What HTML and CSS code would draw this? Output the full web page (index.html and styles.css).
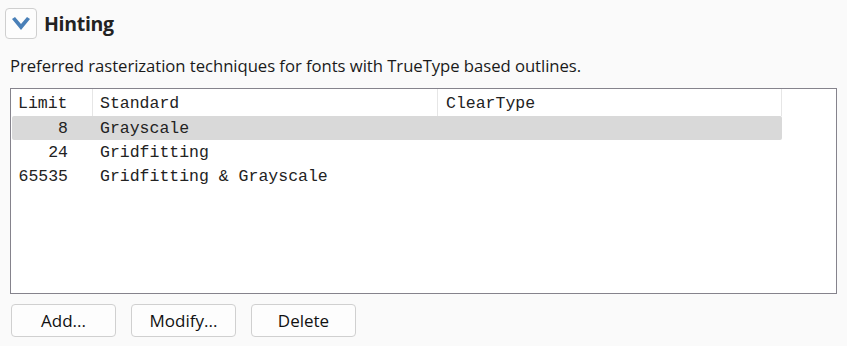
FILE: index.html
```html
<!DOCTYPE html>
<html lang="en">
<head>
    <meta charset="UTF-8">
    <title>Hinting</title>
    <link rel="stylesheet" href="styles.css">
</head>
<body>

    <!-- Section heading -->
    <div class="section-head">
        <span class="toggle">
            <svg width="20" height="14" viewBox="0 0 20 14">
                <path d="M1 2 L4 0 L10 7 L16 0 L19 2 L10 13 Z" fill="#4a80b8"/>
            </svg>
        </span>
        <h2>Hinting</h2>
    </div>

    <p class="desc">Preferred rasterization techniques for fonts with TrueType based outlines.</p>

    <!-- Limits list -->
    <div class="list-box">
        <div class="list-row list-header">
            <div class="cell col-limit">Limit</div>
            <div class="cell col-std">Standard</div>
            <div class="cell col-ct">ClearType</div>
        </div>
        <div class="list-row selected">
            <div class="cell col-limit num">8</div>
            <div class="cell col-std">Grayscale</div>
            <div class="cell col-ct"></div>
        </div>
        <div class="list-row">
            <div class="cell col-limit num">24</div>
            <div class="cell col-std">Gridfitting</div>
            <div class="cell col-ct"></div>
        </div>
        <div class="list-row">
            <div class="cell col-limit num">65535</div>
            <div class="cell col-std">Gridfitting &amp; Grayscale</div>
            <div class="cell col-ct"></div>
        </div>
    </div>

    <div class="buttons">
        <button>Add...</button>
        <button>Modify...</button>
        <button>Delete</button>
    </div>

</body>
</html>
```

FILE: styles.css
```css
* {
  margin: 0;
  padding: 0;
  box-sizing: border-box;
}

body {
  background-color: #fafafa;
  color: #1a1a1a;
  font-family: "Open Sans", "Noto Sans", sans-serif;
  padding: 8px 10px 0 10px;
  width: 847px;
  height: 346px;
  overflow: hidden;
}

.section-head {
  display: flex;
  align-items: center;
  margin-left: -5px;
  height: 31px;
}

.toggle {
  width: 32px;
  height: 31px;
  border: 1px solid #cfcfcf;
  border-radius: 4px;
  background: #fdfdfd;
  display: flex;
  justify-content: center;
  align-items: center;
}

h2 {
  font-size: 19.5px;
  font-weight: bold;
  color: #222;
  margin-left: 7px;
  letter-spacing: -0.3px;
}

.desc {
  font-size: 16.7px;
  margin-top: 15px;
  line-height: 23px;
  color: #1a1a1a;
  letter-spacing: -0.05px;
}

.list-box {
  margin-top: 11px;
  width: 827px;
  height: 206px;
  border: 1px solid #85838c;
  background: #fff;
  padding: 0 1px;
}

.list-row {
  display: flex;
  width: 770px;
  height: 24px;
  align-items: center;
  font-family: "Liberation Mono", "Courier New", monospace;
  font-size: 16.5px;
  color: #222;
  white-space: nowrap;
}

.list-header {
  height: 27px;
}

.list-header .cell {
  height: 27px;
  line-height: 29px;
  border-right: 1px solid #e6e6e6;
}

.selected {
  background: #d9d9d9;
  border-radius: 2px;
}

.col-limit {
  width: 81px;
  padding-left: 6px;
}

.col-limit.num {
  text-align: right;
  padding-right: 25px;
}

.col-std {
  width: 345px;
  padding-left: 7px;
}

.col-ct {
  width: 344px;
  padding-left: 8px;
}

.buttons {
  display: flex;
  gap: 15px;
  margin-top: 10px;
  margin-left: 1px;
}

button {
  width: 105px;
  height: 33px;
  background: #fdfdfd;
  border: 1px solid #d0d0d0;
  border-radius: 4px;
  font-family: "Open Sans", "Noto Sans", sans-serif;
  font-size: 17px;
  color: #111;
}
```
